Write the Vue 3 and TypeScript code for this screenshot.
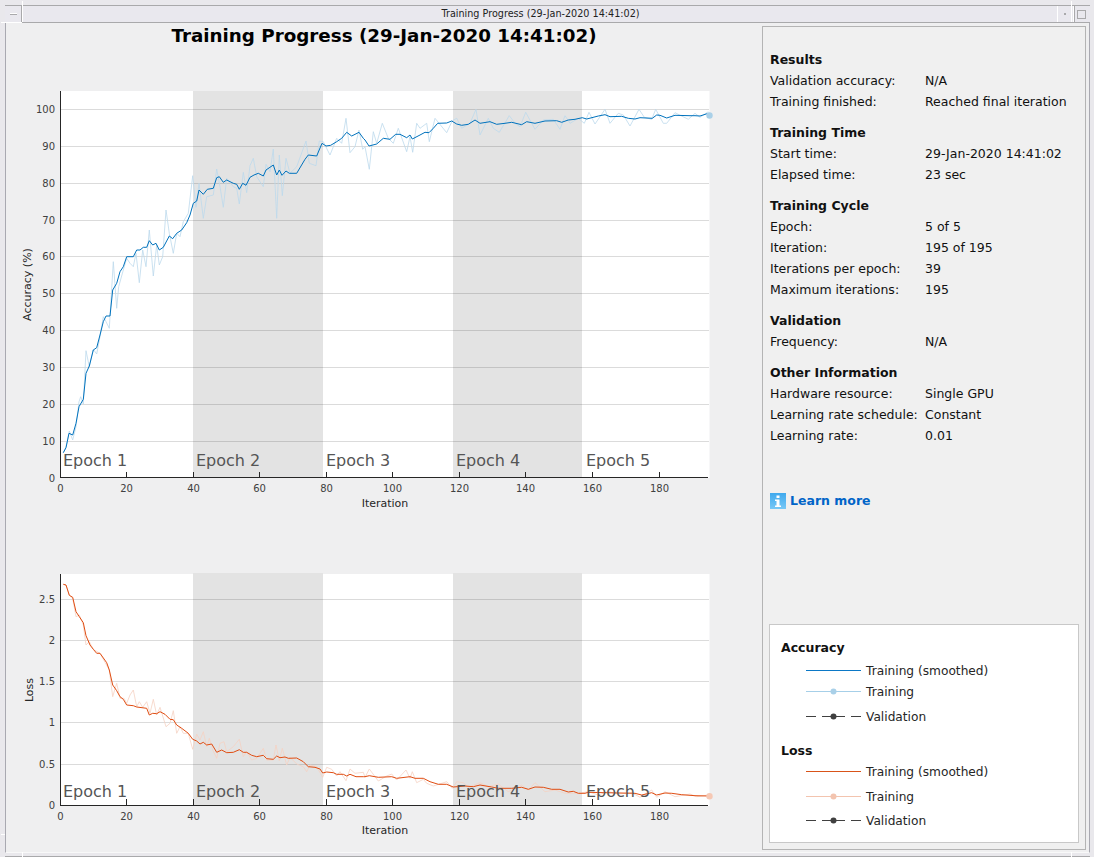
<script setup lang="ts">
type Row = [string, string]
interface Section { title: string; rows: Row[] }

const sections: Section[] = [
  { title: 'Results', rows: [['Validation accuracy:', 'N/A'], ['Training finished:', 'Reached final iteration']] },
  { title: 'Training Time', rows: [['Start time:', '29-Jan-2020 14:41:02'], ['Elapsed time:', '23 sec']] },
  { title: 'Training Cycle', rows: [['Epoch:', '5 of 5'], ['Iteration:', '195 of 195'], ['Iterations per epoch:', '39'], ['Maximum iterations:', '195']] },
  { title: 'Validation', rows: [['Frequency:', 'N/A']] },
  { title: 'Other Information', rows: [['Hardware resource:', 'Single GPU'], ['Learning rate schedule:', 'Constant'], ['Learning rate:', '0.01']] },
]

// Curve points are read from 3x crops: each run has its crop origin.
const conv = (s: string, ox: number, oy: number): string =>
  s.trim().split(/\s+/).map((p) => {
    const [a, b] = p.split(',').map(Number)
    return `${(ox + a / 3).toFixed(1)},${(oy + b / 3).toFixed(1)}`
  }).join(' ')

const accSmooth = [
  conv('190,518 198,503 207,460 218,465 228,430 237,380 250,358 258,280 268,258 280,210 290,203 300,165 310,125 318,108 330,108 338,30', 0, 280),
  conv('350,850 360,815 370,800 380,770 400,770 410,750 420,750 430,742 440,742 448,722 458,735 468,730 478,750 490,742 508,708 518,716 530,700 545,690 560,668 570,645 580,610 590,603 597,570 610,583 622,568 640,565 650,533 658,530 670,547 680,540 700,550 710,553 718,568 728,550 738,556 750,532 762,525 775,520 790,528 798,510 820,495 830,525 838,510 846,526 858,513 868,520 890,520 915,478 925,465 950,468 966,430 978,438 992,436 1010,425 1025,415 1040,397 1055,408 1077,397 1090,415', 0, 0),
  conv('0,420 12,438 35,432 55,415 75,418 92,403 105,403 125,413 135,405 142,417 165,405 180,397 192,398 205,385 218,370 245,369 260,363 275,372 290,376 310,373 330,360 345,370 375,365 395,373 420,370 440,367 470,374 485,365 510,370 540,363 575,362 590,367 610,360 630,358 652,353 665,357 700,348 720,344 735,350 770,349 790,355 810,357 825,353 862,355 875,345 885,346 905,354 930,346 975,347 990,347 1005,348 1030,340', 365, 0),
].join(' ')

const accRaw = [
  conv('190,518 198,500 208,453 218,480 228,440 237,365 242,350 250,372 258,212 268,260 280,208 290,222 300,170 310,110 318,125 328,145', 0, 280),
  conv('340,785', 0, 0),
  conv('350,85 356,20', 0, 280),
  conv('370,810 380,775 390,790 400,800 408,760 418,848 428,750 438,800 448,690 460,828 470,735 478,795 488,770 498,630 508,700 520,760 530,700 540,710 550,665 565,640 578,527 588,622 597,550 610,655 620,590 640,585 650,507 660,560 670,622 680,535 700,560 710,565 718,612 730,517 740,578 750,497 760,475 770,530 790,560 798,493 810,515 820,447 830,655 838,465 847,587 858,475 870,520 890,500 918,423 928,490 948,497 958,423 970,425 990,465 1010,415 1025,430 1038,355 1050,458 1065,440 1077,390 1088,448', 0, 0),
  conv('0,440 13,508 25,395 35,430 52,370 70,415 85,430 100,385 125,455 135,410 143,457 155,370 165,385 185,370 193,425 210,355 245,398 262,362 275,355 290,385 315,370 333,328 345,405 370,355 385,385 403,397 433,347 450,370 465,380 482,337 510,388 535,360 565,358 585,388 600,347 615,370 640,355 658,370 672,337 690,372 720,328 735,370 760,340 775,345 795,378 822,328 838,352 860,358 872,328 895,370 905,370 930,338 970,358 990,340 1005,352 1030,335', 365, 0),
].join(' ')

const lossSmooth = [
  conv('190,43 198,45 208,76 218,82 228,125 238,140 250,158 258,197 270,225 280,238 290,250 300,250 320,278 328,300 338,345 350,362 360,380 370,388 380,405 400,407 410,411 440,415 448,435 458,430 470,431 480,425 495,433 510,448 520,449 530,465 545,475 565,490 578,508 590,513 600,522 610,517 620,525 635,522 650,547 665,540 680,548 700,547 718,539 730,547 740,547 755,556 770,560 790,556 800,566 820,568 830,558 840,563 855,561 865,565 890,564 910,575 925,590 945,592 960,597 968,609 980,606 1000,608 1010,613 1030,613 1040,618 1050,613 1068,620 1090,620', 0, 570),
  conv('0,620 13,617 40,622 80,620 95,625 120,622 135,620 150,625 175,625 195,635 220,643 245,643 265,651 300,648 325,650 345,645 380,651 400,655 440,655 470,652 490,658 510,651 535,652 560,658 585,658 610,666 625,664 640,670 660,670 670,667 720,668 810,670 830,675 860,668 875,675 900,669 920,670 950,674 990,677 1030,678', 365, 570),
].join(' ')

const lossRaw = [
  conv('190,43 198,45 208,75 218,85 228,140 238,135 250,165 258,225 268,215 280,238 300,250 328,300 338,380 350,340 360,385 372,385 380,400 390,375 400,360 410,410 418,395 428,412 440,395 450,430 460,388 470,435 480,412 498,470 510,460 520,422 530,490 540,470 550,490 565,490 578,538 590,492 600,510 610,485 620,530 628,505 638,540 650,565 660,520 672,515 680,545 700,530 718,508 730,560 740,545 755,570 770,565 790,535 800,570 820,570 828,525 838,572 847,535 860,585 870,562 890,582 910,590 920,605 930,585 950,590 968,622 980,592 995,598 1010,618 1020,605 1038,632 1050,597 1065,610 1090,607', 0, 570),
  conv('0,622 13,597 40,633 65,618 80,612 95,630 123,600 135,625 142,605 155,638 175,628 185,640 205,648 245,635 262,655 275,635 295,638 310,652 345,638 370,650 400,642 430,665 470,645 490,660 510,638 540,665 570,660 600,670 640,670 670,665 700,675 730,665 760,672 800,668 825,682 860,660 875,682 900,665 930,680 975,672 995,680 1030,675', 365, 570),
].join(' ')

const xTicks: [number, string][] = [
  [60.5, '0'], [126.5, '20'], [193.5, '40'], [259.5, '60'], [326.5, '80'],
  [392.5, '100'], [459.5, '120'], [525.5, '140'], [592.5, '160'], [659.5, '180'],
]
const epochX: [number, string][] = [
  [63, 'Epoch 1'], [196, 'Epoch 2'], [326, 'Epoch 3'], [456, 'Epoch 4'], [586, 'Epoch 5'],
]
const accY: [number, string][] = [
  [109.5, '100'], [146.5, '90'], [183.5, '80'], [220.5, '70'], [256.5, '60'], [293.5, '50'],
  [330.5, '40'], [367.5, '30'], [404.5, '20'], [441.5, '10'], [477.5, '0'],
]
const lossY: [number, string][] = [
  [599.5, '2.5'], [640.5, '2'], [681.5, '1.5'], [722.5, '1'], [764.5, '0.5'], [805.5, '0'],
]

interface LegendRow { label: string; kind: 'smooth' | 'raw' | 'val'; cls: string }
const legendAcc: LegendRow[] = [
  { label: 'Training (smoothed)', kind: 'smooth', cls: 'r2' },
  { label: 'Training', kind: 'raw', cls: 'r0' },
  { label: 'Validation', kind: 'val', cls: 'r4' },
]
const legendLoss: LegendRow[] = [
  { label: 'Training (smoothed)', kind: 'smooth', cls: 'r0' },
  { label: 'Training', kind: 'raw', cls: 'r4' },
  { label: 'Validation', kind: 'val', cls: 'r3' },
]
</script>

<template>
  <div class="app">
    <div class="titlebar">
      <div class="tb-btn tb-left"><span class="glyph-min"></span></div>
      <div class="tb-title">Training Progress (29-Jan-2020 14:41:02)</div>
      <div class="tb-btn tb-dot"><span class="glyph-dot"></span></div>
      <div class="tb-btn tb-max"><span class="glyph-max"></span></div>
    </div>
    <div class="content">
      <div class="plots">
        <h1 class="plot-title">Training Progress (29-Jan-2020 14:41:02)</h1>
        <svg class="plot plot-a" width="756" height="430" viewBox="6 85 756 430">
          <rect x="60.5" y="91" width="649" height="387" fill="#fff" />
          <rect x="193" y="91" width="130" height="387" fill="#e3e3e3" />
          <rect x="453" y="91" width="129" height="387" fill="#e3e3e3" />
          <line v-for="t in accY.slice(0, -1)" :key="t[1]" x1="60.5" x2="709" :y1="t[0]" :y2="t[0]" class="grid" />
          <polyline :points="accRaw" class="raw-a" />
          <polyline :points="accSmooth" class="smooth-a" />
          <circle cx="709.5" cy="115.5" r="3.2" fill="#a9d0e8" />
          <text v-for="e in epochX" :key="e[1]" :x="e[0]" y="466" class="epoch">{{ e[1] }}</text>
          <line x1="60.5" x2="60.5" y1="91" y2="478" class="axis" />
          <line x1="60" x2="708" y1="477.5" y2="477.5" class="axis" />
          <line v-for="t in xTicks.slice(1)" :key="t[1]" :x1="t[0]" :x2="t[0]" y1="477" y2="472" class="axis" />
          <text v-for="t in accY" :key="t[1]" x="55" :y="t[1] === '0' ? 482 : t[0] + 3" class="ytick">{{ t[1] }}</text>
          <text v-for="t in xTicks" :key="t[1]" :x="t[0]" y="491.5" class="xtick">{{ t[1] }}</text>
          <text x="385" y="507" class="axlabel">Iteration</text>
          <text class="axlabel" transform="translate(31 284.5) rotate(-90)">Accuracy (%)</text>
        </svg>
        <svg class="plot plot-b" width="756" height="280" viewBox="6 565 756 280">
          <rect x="60.5" y="574" width="649" height="232" fill="#fff" />
          <rect x="193" y="573" width="130" height="233" fill="#e3e3e3" />
          <rect x="453" y="573" width="129" height="233" fill="#e3e3e3" />
          <line v-for="t in lossY.slice(0, -1)" :key="t[1]" x1="60.5" x2="709" :y1="t[0]" :y2="t[0]" class="grid" />
          <polyline :points="lossRaw" class="raw-l" />
          <polyline :points="lossSmooth" class="smooth-l" />
          <circle cx="709.5" cy="796.3" r="3.2" fill="#f6c8b4" />
          <text v-for="e in epochX" :key="e[1]" :x="e[0]" y="797" class="epoch">{{ e[1] }}</text>
          <line x1="60.5" x2="60.5" y1="574" y2="806" class="axis" />
          <line x1="60" x2="708" y1="805.5" y2="805.5" class="axis" />
          <line v-for="t in xTicks.slice(1)" :key="t[1]" :x1="t[0]" :x2="t[0]" y1="805" y2="799" class="axis" />
          <text v-for="t in lossY" :key="t[1]" x="55" :y="t[0] + 3" class="ytick">{{ t[1] }}</text>
          <text v-for="t in xTicks" :key="t[1]" :x="t[0]" y="819.5" class="xtick">{{ t[1] }}</text>
          <text x="385" y="834" class="axlabel">Iteration</text>
          <text class="axlabel" transform="translate(33 690) rotate(-90)">Loss</text>
        </svg>
      </div>
      <aside class="panel">
        <section v-for="s in sections" :key="s.title" class="section">
          <h2 class="section-title">{{ s.title }}</h2>
          <div v-for="r in s.rows" :key="r[0]" class="info-row">
            <span class="info-label">{{ r[0] }}</span>
            <span>{{ r[1] }}</span>
          </div>
        </section>
        <a class="learn">
          <svg width="16" height="16" viewBox="0 0 16 16" class="learn-icon">
            <defs>
              <linearGradient id="infoGrad" x1="0" y1="0" x2="0" y2="1">
                <stop offset="0" stop-color="#3fa9ee" />
                <stop offset="1" stop-color="#78c8f6" />
              </linearGradient>
            </defs>
            <rect width="16" height="16" fill="url(#infoGrad)" />
            <rect x="6.5" y="2.5" width="3" height="2.5" fill="#fff" />
            <path d="M5 6.5h4.5v6h1.5v1.5H5v-1.5h1.5v-4.5H5z" fill="#fff" />
          </svg>
          <span>Learn more</span>
        </a>
        <div class="legend">
          <h3 class="legend-title">Accuracy</h3>
          <div v-for="r in legendAcc" :key="r.label" class="legend-row" :class="r.cls">
            <svg width="55" height="9" viewBox="0 0 55 9" class="sample">
              <line v-if="r.kind === 'smooth'" x1="0" x2="55" y1="4.5" y2="4.5" stroke="#0b78c6" />
              <template v-else-if="r.kind === 'raw'">
                <line x1="0" x2="55" y1="4.5" y2="4.5" stroke="#a6cfe8" />
                <circle cx="27.5" cy="4.5" r="3" fill="#a9d0e8" />
              </template>
              <template v-else>
                <line x1="0" x2="55" y1="4.5" y2="4.5" stroke="#404040" stroke-dasharray="10 6 23 6 10" />
                <circle cx="27.5" cy="4.5" r="3" fill="#404040" />
              </template>
            </svg>
            <span class="legend-text">{{ r.label }}</span>
          </div>
          <h3 class="legend-title second">Loss</h3>
          <div v-for="r in legendLoss" :key="r.label" class="legend-row" :class="r.cls">
            <svg width="55" height="9" viewBox="0 0 55 9" class="sample">
              <line v-if="r.kind === 'smooth'" x1="0" x2="55" y1="4.5" y2="4.5" stroke="#d95319" />
              <template v-else-if="r.kind === 'raw'">
                <line x1="0" x2="55" y1="4.5" y2="4.5" stroke="#f3c4af" />
                <circle cx="27.5" cy="4.5" r="3" fill="#f3c4af" />
              </template>
              <template v-else>
                <line x1="0" x2="55" y1="4.5" y2="4.5" stroke="#404040" stroke-dasharray="10 6 23 6 10" />
                <circle cx="27.5" cy="4.5" r="3" fill="#404040" />
              </template>
            </svg>
            <span class="legend-text">{{ r.label }}</span>
          </div>
        </div>
      </aside>
    </div>
    <div class="footer"></div>
    <i class="notch n-tl-h"></i>
    <i class="notch n-tl-v"></i>
    <i class="notch n-tr-v"></i>
    <i class="notch n-bl-h"></i>
    <i class="notch n-bl-v"></i>
    <i class="notch n-br-v"></i>
  </div>
</template>

<style>
html, body { margin: 0; background: #e9e8ec; }
</style>

<style scoped>
.app {
  position: relative;
  width: 1094px;
  height: 857px;
  box-sizing: border-box;
  padding: 5px 4px 0 5px;
  background: #e9e8ec;
  display: flex;
  flex-direction: column;
  overflow: hidden;
  font-family: "DejaVu Sans", sans-serif;
  color: #111;
}
.titlebar {
  height: 16px;
  flex: none;
  display: flex;
  align-items: stretch;
  background: #e9e8ee;
  border-top: 1px solid #a9a9ab;
  border-bottom: 1px solid #a9a9ab;
}
.tb-btn { flex: none; display: flex; align-items: center; justify-content: center; }
.tb-left { width: 17px; box-shadow: inset -1px 0 0 #a9a9ab; }
.glyph-min { width: 7px; height: 1px; background: #fff; border-bottom: 1px solid #a9a9ab; }
.tb-title {
  flex: 1;
  text-align: center;
  font-size: 9.64px;
  line-height: 16px;
  color: #222;
  padding-left: 2px;
}
.tb-dot { width: 16px; box-shadow: inset 1px 0 0 #fff; }
.glyph-dot { width: 2px; height: 2px; background: #a9a9ab; }
.tb-max { width: 17px; box-shadow: inset 1px 0 0 #fff, inset 2px 0 0 #a9a9ab; }
.glyph-max { width: 7px; height: 7px; border: 1px solid #a9a9ab; }
.content {
  flex: 1;
  min-height: 0;
  display: flex;
  background: #efeff0;
  border-left: 1px solid #a9a9b1;
  border-right: 1px solid #a9a9b1;
  border-bottom: 1px solid #f8f8f8;
  padding-top: 3px;
}
.plots { width: 756px; flex: none; }
.plot-title {
  margin: 0;
  height: 59px;
  font-size: 18.3px;
  line-height: 17px;
  padding-top: 1px;
  text-align: center;
  font-weight: 700;
  color: #000;
  box-sizing: border-box;
  width: 756px;
}
.plot { display: block; }
.plot-b { margin-top: 50px; }
.grid { stroke: #000; stroke-opacity: 0.14; stroke-width: 1; shape-rendering: crispEdges; }
.axis { stroke: #262626; stroke-width: 1; shape-rendering: crispEdges; }
.raw-a, .smooth-a, .raw-l, .smooth-l { fill: none; stroke-linejoin: round; }
.raw-a { stroke: #bcd9ec; stroke-width: 0.8; }
.smooth-a { stroke: #0072bd; stroke-width: 1; }
.raw-l { stroke: #f5d2c3; stroke-width: 0.8; }
.smooth-l { stroke: #e04d12; stroke-width: 1; }
.epoch { font-size: 16px; fill: #555; }
.ytick { font-size: 10px; fill: #404040; text-anchor: end; }
.xtick { font-size: 10px; fill: #404040; text-anchor: middle; }
.axlabel { font-size: 11px; fill: #262626; text-anchor: middle; }
.panel {
  flex: none;
  width: 324px;
  box-sizing: border-box;
  margin-bottom: 2px;
  padding: 22px 6px 6px 6px;
  background: #f0f0f0;
  border: 1px solid #b4b4b4;
  display: flex;
  flex-direction: column;
  font-size: 12.5px;
  line-height: 21px;
}
.section { margin-bottom: 10px; padding-left: 1px; }
.section-title { margin: 0; font-size: 12.5px; line-height: 21px; font-weight: 700; }
.info-row { display: grid; grid-template-columns: 155px 1fr; height: 21px; line-height: 21px; }
.learn {
  margin-top: 37px;
  margin-left: 1px;
  height: 16px;
  display: flex;
  align-items: center;
  gap: 4px;
  color: #0064c8;
  font-weight: 700;
  font-size: 12.5px;
  line-height: 16px;
}
.learn-icon { flex: none; }
.legend {
  margin-top: auto;
  height: 219px;
  box-sizing: border-box;
  background: #fff;
  border: 1px solid #c8c8c8;
  padding: 12px 11px 0 11px;
  font-size: 12.2px;
}
.legend-title { margin: 0; font-size: 12.5px; line-height: 21px; font-weight: 700; }
.legend-title.second { margin-top: 13px; }
.legend-row {
  display: flex;
  align-items: center;
  gap: 5px;
  height: 21px;
  padding-left: 25px;
  color: #262626;
}
.legend-text { line-height: 23px; height: 21px; }
.sample { flex: none; }
.r0 { margin-top: 0; }
.r2 { margin-top: 2px; }
.r3 { margin-top: 3px; }
.r4 { margin-top: 4px; }
.footer {
  height: 3px;
  flex: none;
  border-bottom: 1px solid #a9a9ab;
}
.notch { position: absolute; display: block; }
.n-tl-h { left: 1px; top: 22px; width: 21px; height: 1px; background: #fff; }
.n-tl-v { left: 22px; top: 1px; width: 1px; height: 21px; background: #fff; }
.n-tr-v { left: 1071px; top: 1px; width: 1px; height: 21px; background: #fff; }
.n-bl-h { left: 1px; top: 834px; width: 4px; height: 1px; background: #fff; }
.n-bl-v { left: 22px; top: 852px; width: 1px; height: 5px; background: #fff; }
.n-br-v { left: 1071px; top: 852px; width: 1px; height: 5px; background: #fff; }
</style>
